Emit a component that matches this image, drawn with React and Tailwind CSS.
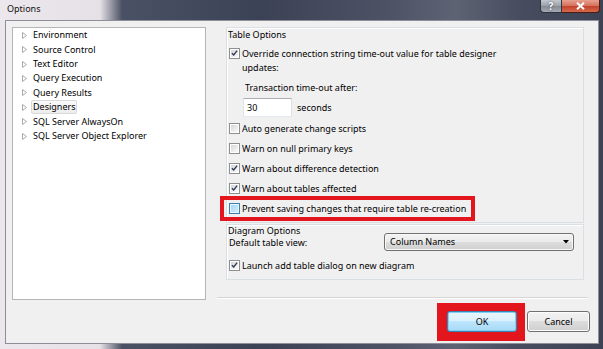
import React from "react";

function Checkbox({ checked = false, hover = false }) {
  return (
    <span
      className={
        hover
          ? "mt-px flex h-[11px] w-[11px] shrink-0 border border-[#3c7fb1] bg-[#eaf6fd] p-px"
          : "mt-px flex h-[11px] w-[11px] shrink-0 border border-[#8e8f8f] bg-white p-px"
      }
    >
      <span
        className={
          hover
            ? "flex h-full w-full items-center justify-center bg-gradient-to-br from-[#9fd5f7] to-[#d4eefc]"
            : "flex h-full w-full items-center justify-center bg-gradient-to-br from-[#d6d6d6] to-[#fbfbfb]"
        }
      >
        {checked && (
          <svg width="8" height="8" viewBox="0 0 8 8" className="-mt-px">
            <path d="M1 4.2 L3.1 6.3 L7 1.2" fill="none" stroke="#2b3a58" strokeWidth="1.5" />
          </svg>
        )}
      </span>
    </span>
  );
}

function CheckRow({ label, checked, hover, className }) {
  return (
    <div className={className}>
      <div className="flex h-[14px] items-start gap-[2px]">
        <Checkbox checked={checked} hover={hover} />
        <span className="leading-[14px]">{label}</span>
      </div>
    </div>
  );
}

function TreeItem({ label, selected }) {
  return (
    <div className="flex h-[14.43px] items-center gap-[4px] pl-[9px]">
      <svg width="5" height="7" viewBox="0 0 5 7" className="shrink-0">
        <path d="M0.5 0.5 L4.5 3.5 L0.5 6.5 Z" fill="#ffffff" stroke="#a9a9a9" strokeWidth="1" />
      </svg>
      <span
        className={
          selected
            ? "rounded-[2px] border border-[#d9d9d9] bg-[linear-gradient(#fafafa,#ededed)] px-px leading-[12px]"
            : "border border-transparent px-px leading-[12px]"
        }
      >
        {label}
      </span>
    </div>
  );
}

export default function App() {
  const tree = [
    "Environment",
    "Source Control",
    "Text Editor",
    "Query Execution",
    "Query Results",
    "Designers",
    "SQL Server AlwaysOn",
    "SQL Server Object Explorer",
  ];
  return (
    <div className="flex h-[349px] w-[603px] flex-col overflow-hidden bg-[linear-gradient(90deg,#ece7ec_0px,#e6e1e7_100px,#4b5164_122px,#3c4255_260px,#4d5265_390px,#5e6374_455px,#474c5e_520px,#3d4355_603px)] font-['Noto_Sans',sans-serif] text-[9px] text-black">
      {/* Title bar */}
      <div className="flex h-[20px] shrink-0">
        <div className="flex h-[18px] items-center pl-[7px] text-[9px] leading-[12px] text-[#111]">Options</div>
        <div className="ml-auto mr-[3px] flex self-start">
          <div className="flex h-[13px] w-[22px] items-center justify-center rounded-bl-[4px] border border-t-0 border-[#2e3440] bg-[linear-gradient(#c3c7ce,#9ba0a9_50%,#848a95_50%,#a4a9b2)] text-[10px] font-bold leading-[10px] text-white [text-shadow:0_0_2px_#333]">
            ?
          </div>
          <div className="flex h-[13px] w-[38px] items-center justify-center rounded-br-[4px] border border-l-0 border-t-0 border-[#4a1c14] bg-[linear-gradient(#e8a08e,#d3705c_50%,#c2402a_50%,#d66a4c)]">
            <svg width="9" height="8" viewBox="0 0 9 8">
              <path d="M1 0.8 L8 7.2 M8 0.8 L1 7.2" stroke="#ffffff" strokeWidth="2" />
            </svg>
          </div>
        </div>
      </div>

      {/* Client area + frame */}
      <div className="flex flex-1 pb-[5px] pl-[5px] pr-[4px]">
        <div className="flex flex-1 flex-col border border-[#8e8f99] bg-[#f0f0f0] pl-[6px] pt-[6px]">
          <div className="flex">
            {/* Tree */}
            <div className="h-[273px] w-[194px] shrink-0 border border-[#b5b5b5] bg-white">
              {tree.map((t) => (
                <TreeItem key={t} label={t} selected={t === "Designers"} />
              ))}
            </div>

            {/* Right column */}
            <div className="ml-[11px] flex h-[273px] w-[373px] flex-col">
              {/* Table options */}
              <div className="ml-[9px] flex w-[358px] flex-col border border-[#d9dfe3] pl-[2px] pb-[6px] shadow-[inset_1px_1px_0_#ffffff]">
                <div className="-ml-px h-[14px] leading-[14px]">Table Options</div>
                <div className="mt-[5px] flex items-start gap-[2px]">
                  <Checkbox checked />
                  <span className="leading-[14px]">
                    Override connection string time-out value for table designer
                    <br />
                    updates:
                  </span>
                </div>
                <div className="ml-[16px] mt-[6px] h-[14px] leading-[14px]">Transaction time-out after:</div>
                <div className="ml-[14px] mt-[3px] flex items-center gap-[5px]">
                  <div className="flex h-[19px] w-[49px] items-center border border-[#abadb3] border-l-[#e2e3ea] border-r-[#dbdfe6] border-b-[#e3e9ef] bg-white pl-[3px]">
                    30
                  </div>
                  <span className="leading-[14px]">seconds</span>
                </div>
                <CheckRow className="mt-[5px]" label="Auto generate change scripts" />
                <CheckRow className="mt-[6px]" label="Warn on null primary keys" />
                <CheckRow className="mt-[6px]" label="Warn about difference detection" checked />
                <CheckRow className="mt-[6px]" label="Warn about tables affected" checked />
                <div className="relative mt-[6px]">
                  <div className="flex h-[14px] items-start gap-[2px]">
                    <Checkbox hover />
                    <span className="leading-[14px]">Prevent saving changes that require table re-creation</span>
                  </div>
                  <div className="absolute -left-[9px] -top-[6px] h-[25px] w-[255px] border-4 border-[#e3161e]" />
                </div>
              </div>

              {/* Diagram options */}
              <div className="ml-[9px] mt-px flex w-[358px] flex-col border border-[#d9dfe3] pl-[2px] pb-[6px] shadow-[inset_1px_1px_0_#ffffff]">
                <div className="-ml-px h-[11px] leading-[11px]">Diagram Options</div>
                <div className="-mt-[3px] flex h-[18px] items-center justify-between pr-[9px]">
                  <span className="leading-[11px]">Default table view:</span>
                  <div className="flex h-[18px] w-[190px] items-center justify-between rounded-[3px] border border-[#707070] bg-[linear-gradient(#f2f2f2_0%,#ebebeb_50%,#dddddd_50%,#cfcfcf_100%)] pl-[5px] pr-[4px] shadow-[inset_0_0_0_1px_#f8f8f8]">
                    <span className="leading-[12px]">Column Names</span>
                    <svg width="6" height="4" viewBox="0 0 6 4">
                      <path d="M0 0 H6 L3 3.5 Z" fill="#000000" />
                    </svg>
                  </div>
                </div>
                <CheckRow className="mt-[8px]" label="Launch add table dialog on new diagram" checked />
              </div>

              {/* separator */}
              <div className="mb-px mr-[2px] mt-auto border-b border-t border-b-white border-t-[#d5d5d5]" />
            </div>
          </div>

          {/* Buttons */}
          <div className="mt-[3px] flex items-start justify-end gap-[2px] pr-[8px]">
            <div className="flex bg-[#e3161e] pb-[9px] pl-[10px] pr-[8px] pt-[8px]">
              <div className="flex h-[21px] w-[70px] items-center justify-center rounded-[3px] border border-[#3c7fb1] bg-[linear-gradient(#eaf6fd_0%,#d9f0fc_50%,#bee6fd_50%,#a7d9f5_100%)] shadow-[inset_0_0_0_1px_#7fd0f5] leading-[12px]">
                OK
              </div>
            </div>
            <div className="mt-[8px] flex h-[21px] w-[63px] items-center justify-center rounded-[3px] border border-[#707070] bg-[linear-gradient(#f2f2f2_0%,#ebebeb_50%,#dddddd_50%,#cfcfcf_100%)] shadow-[inset_0_0_0_1px_#fcfcfc] leading-[12px]">
              Cancel
            </div>
          </div>
        </div>
      </div>
    </div>
  );
}
